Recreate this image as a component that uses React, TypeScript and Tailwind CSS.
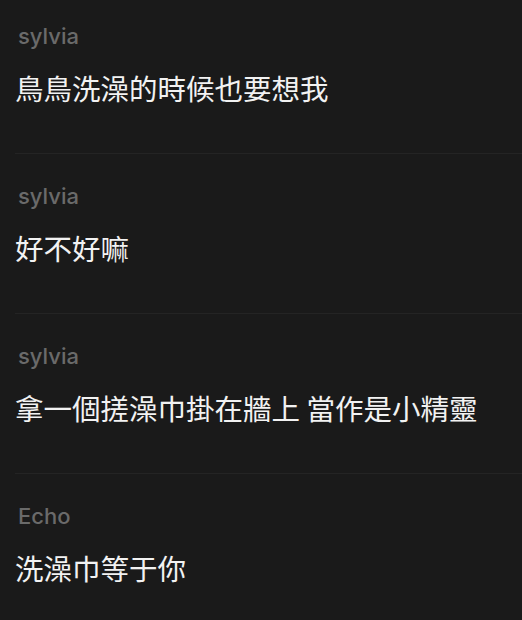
const messages = [
  { name: "sylvia", text: "鳥鳥洗澡的時候也要想我" },
  { name: "sylvia", text: "好不好嘛" },
  { name: "sylvia", text: "拿一個搓澡巾掛在牆上 當作是小精靈" },
  { name: "Echo", text: "洗澡巾等于你" },
];

const App = () => {
  return (
    <div className="h-[620px] w-full overflow-hidden bg-[#1a1a1a]">
      <ul className="-mt-[6px] flex flex-col">
        {messages.map((m, i) => (
          <li key={i} className="flex flex-col">
            <div className="px-[15px] pt-[30px] pb-[47px]">
              <div className="pl-[3px] font-['Inter',sans-serif] text-[22px] font-medium leading-[24px] text-[#6a6a6a]">
                {m.name}
              </div>
              <div className="mt-[22px] font-['Noto_Sans_CJK_TC',sans-serif] text-[28.5px] leading-[36px] text-[#f2f2f2]">
                {m.text}
              </div>
            </div>
            <div className="ml-[15px] h-px bg-[#242424]" />
          </li>
        ))}
      </ul>
    </div>
  );
};

export default App;
